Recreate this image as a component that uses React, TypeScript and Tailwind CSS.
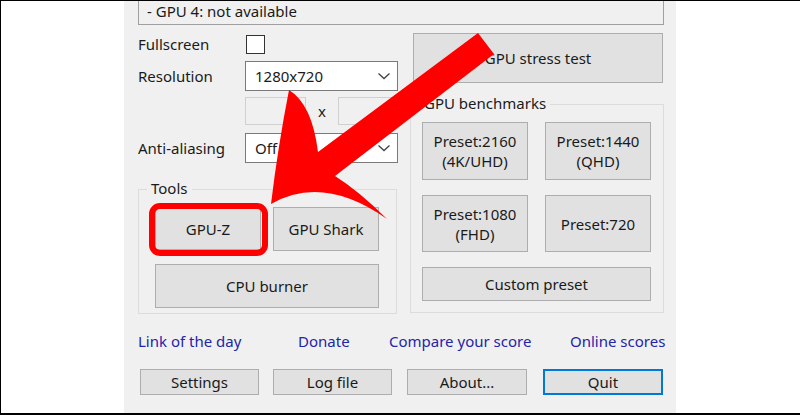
import React from "react";

const font = { fontFamily: '"Noto Sans", "Open Sans", sans-serif' };

function Btn({
  className = "",
  border = "border border-[#adadad]",
  children,
}: {
  className?: string;
  border?: string;
  children: React.ReactNode;
}) {
  return (
    <div
      className={`flex items-center justify-center text-center bg-[#e1e1e1] text-[#1a1a1a] leading-[20px] ${border} ${className}`}
    >
      {children}
    </div>
  );
}

function Chevron() {
  return (
    <svg width="14" height="10" viewBox="0 0 14 10" className="mr-[6px]">
      <polyline points="1.5,2.5 7,7.5 12.5,2.5" fill="none" stroke="#444" strokeWidth="1.3" />
    </svg>
  );
}

export default function App() {
  return (
    <div
      className="relative w-[800px] h-[415px] bg-white border-t border-l border-b-2 border-black overflow-hidden flex text-[15px] text-[#1a1a1a]"
      style={font}
    >
      <div className="w-[123px] shrink-0 bg-white" />
      <div className="w-[552px] shrink-0 bg-[#f0f0f0] pl-[14px] flex flex-col">
        {/* top info box */}
        <div className="w-[526px] h-[45px] -mt-[21px] border border-[#a0a0a0] bg-[#f0f0f0] flex items-end pl-[8px] pb-[3px] leading-[20px]">
          - GPU 4: not available
        </div>

        <div className="flex">
          {/* left column */}
          <div className="w-[260px] flex flex-col">
            <div className="mt-[10px] h-[19px] flex items-center">
              <span className="w-[108px]">Fullscreen</span>
              <div className="w-[19px] h-[19px] border-[1.5px] border-[#333] bg-white" />
            </div>
            <div className="mt-[7px] h-[30px] flex items-center">
              <span className="w-[107px]">Resolution</span>
              <div className="w-[153px] h-[30px] bg-white border border-[#7a7a7a] flex items-center justify-between pl-[9px]">
                <span>1280x720</span>
                <Chevron />
              </div>
            </div>
            <div className="mt-[6px] h-[28px] flex items-center">
              <div className="w-[107px]" />
              <div className="w-[61px] h-[28px] border border-[#d0d0d0] bg-[#f0f0f0]" />
              <span className="w-[32px] text-center">x</span>
              <div className="w-[60px] h-[28px] border border-[#d0d0d0] bg-[#f0f0f0]" />
            </div>
            <div className="mt-[8px] h-[30px] flex items-center">
              <span className="w-[107px]">Anti-aliasing</span>
              <div className="w-[153px] h-[30px] bg-white border border-[#7a7a7a] flex items-center justify-between pl-[9px]">
                <span>Off</span>
                <Chevron />
              </div>
            </div>
            {/* Tools group */}
            <div className="relative mt-[26px] w-[259px] h-[125px] border border-[#dcdcdc] pt-[17px] pl-[16px]">
              <span className="absolute -top-[12px] left-[8px] px-[4px] bg-[#f0f0f0] leading-[20px]">Tools</span>
              <div className="flex gap-[12px]">
                <Btn className="w-[106px] h-[43px]">GPU-Z</Btn>
                <Btn className="w-[106px] h-[44px]">GPU Shark</Btn>
              </div>
              <Btn className="mt-[13px] w-[224px] h-[44px]">CPU burner</Btn>
            </div>
          </div>

          {/* right column */}
          <div className="ml-[12px] w-[254px] flex flex-col">
            <Btn className="mt-[8px] ml-[3px] w-[250px] h-[50px]">GPU stress test</Btn>
            <div className="relative mt-[21px] w-[254px] h-[209px] border border-[#dcdcdc] pt-[17px] pl-[11px]">
              <span className="absolute -top-[12px] left-[9px] px-[4px] bg-[#f0f0f0] leading-[20px]">GPU benchmarks</span>
              <div className="flex gap-[17px]">
                <Btn className="w-[106px] h-[58px] flex-col">
                  <span>Preset:2160</span>
                  <span>(4K/UHD)</span>
                </Btn>
                <Btn className="w-[106px] h-[58px] flex-col">
                  <span>Preset:1440</span>
                  <span>(QHD)</span>
                </Btn>
              </div>
              <div className="mt-[15px] flex gap-[17px]">
                <Btn className="w-[106px] h-[57px] flex-col">
                  <span>Preset:1080</span>
                  <span>(FHD)</span>
                </Btn>
                <Btn className="w-[106px] h-[57px]">Preset:720</Btn>
              </div>
              <Btn className="mt-[15px] w-[229px] h-[34px]">Custom preset</Btn>
            </div>
          </div>
        </div>

        {/* links */}
        <div className="mt-[17px] h-[20px] flex items-center leading-[20px] text-[#2424a8]">
          <span className="w-[160px]">Link of the day</span>
          <span className="w-[91px]">Donate</span>
          <span className="w-[181px]">Compare your score</span>
          <span>Online scores</span>
        </div>

        {/* bottom buttons */}
        <div className="mt-[18px] flex pl-[2px]">
          <Btn className="w-[119px] h-[26px]">Settings</Btn>
          <Btn className="ml-[14px] w-[119px] h-[26px]">Log file</Btn>
          <Btn className="ml-[15px] w-[120px] h-[26px]">About...</Btn>
          <Btn className="ml-[16px] w-[120px] h-[26px]" border="border-2 border-[#0078d7]">
            Quit
          </Btn>
        </div>
      </div>
      <div className="flex-1 bg-white" />

      {/* red annotation overlay */}
      <svg className="absolute left-0 top-0 pointer-events-none" width="800" height="415" viewBox="0 0 800 415">
        <rect x="151" y="205" width="113" height="47" rx="8" ry="8" fill="none" stroke="#ff0000" strokeWidth="6" />
        <path
          d="M 477 32 L 493 53 L 334 175 Q 358 190 386 218 Q 322 173 270 203 Q 277 145 288 89 Q 311 103 317 151 Z"
          fill="#ff0000"
        />
      </svg>
    </div>
  );
}
